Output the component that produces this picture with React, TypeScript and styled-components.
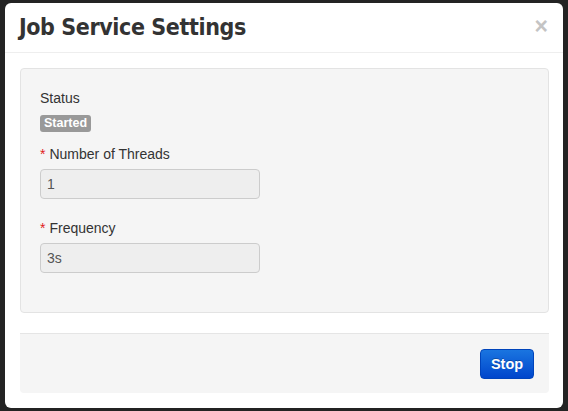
import React from "react";
import styled, { createGlobalStyle } from "styled-components";

const Global = createGlobalStyle`
  html, body { margin: 0; padding: 0; background: #232323; }
  body { font-family: "Liberation Sans", Arial, sans-serif; }
  * { box-sizing: border-box; }
`;

const Page = styled.div`
  width: 568px;
  height: 411px;
  padding: 3px 5px 3px 5px;
  background: #232323;
`;

const Modal = styled.div`
  width: 558px;
  height: 405px;
  background: #fff;
  border-radius: 6px;
  display: flex;
  flex-direction: column;
  overflow: hidden;
`;

const Header = styled.div`
  height: 50px;
  padding: 0 15px 0 14px;
  border-bottom: 1px solid #eeeeee;
  display: flex;
  align-items: center;
  justify-content: space-between;
`;

const Title = styled.h3`
  margin: 0;
  font-family: "DejaVu Sans Condensed", "DejaVu Sans", sans-serif;
  font-weight: bold;
  font-size: 23px;
  color: #333;
  letter-spacing: -0.4px;
  padding-bottom: 2px;
`;

const Close = styled.button`
  border: none;
  background: none;
  padding: 0;
  margin: 0 0 4px 0;
  font-family: "Liberation Sans", Arial, sans-serif;
  font-size: 23px;
  font-weight: bold;
  color: #c4c4c4;
  line-height: 20px;
  cursor: pointer;
`;

const Body = styled.div`
  flex: 1;
  padding: 15px 14px 15px 15px;
  display: flex;
  flex-direction: column;
  gap: 20px;
`;

const Well = styled.div`
  height: 245px;
  background: #f5f5f5;
  border: 1px solid #e3e3e3;
  border-radius: 4px;
  padding: 19px 19px;
  display: flex;
  flex-direction: column;
  align-items: flex-start;
`;

const Label = styled.div<{ $top?: number }>`
  font-size: 14px;
  line-height: 20px;
  color: #333;
  margin-top: ${(p) => p.$top ?? 0}px;
`;

const Req = styled.span`
  color: #e02020;
  margin-right: 4px;
`;

const Badge = styled.span`
  margin-top: 7px;
  display: inline-block;
  height: 17px;
  line-height: 17px;
  padding: 0 4px;
  background: #999999;
  color: #fff;
  font-size: 12.5px;
  font-weight: bold;
  border-radius: 3px;
`;

const Input = styled.input`
  margin-top: 5px;
  width: 220px;
  height: 30px;
  padding: 0 6px;
  background: #eeeeee;
  border: 1px solid #cccccc;
  border-radius: 4px;
  font-family: "Liberation Sans", Arial, sans-serif;
  font-size: 14px;
  color: #555;
  outline: none;
`;

const Footer = styled.div`
  height: 60px;
  background: #f5f5f5;
  border-top: 1px solid #e5e5e5;
  border-radius: 0 0 4px 4px;
  padding: 0 15px;
  display: flex;
  align-items: center;
  justify-content: flex-end;
`;

const Button = styled.button`
  width: 54px;
  height: 30px;
  border: 1px solid #0044bb;
  border-radius: 4px;
  background: linear-gradient(#1a75e0, #0046cc);
  color: #fff;
  font-family: "Liberation Sans", Arial, sans-serif;
  font-size: 14.5px;
  font-weight: bold;
  text-shadow: 0 -1px 0 rgba(0, 0, 0, 0.25);
  cursor: pointer;
`;

export default function App() {
  return (
    <Page>
      <Global />
      <Modal>
        <Header>
          <Title>Job Service Settings</Title>
          <Close>×</Close>
        </Header>
        <Body>
          <Well>
            <Label>Status</Label>
            <Badge>Started</Badge>
            <Label $top={12}>
              <Req>*</Req>Number of Threads
            </Label>
            <Input readOnly value="1" />
            <Label $top={19}>
              <Req>*</Req>Frequency
            </Label>
            <Input readOnly value="3s" />
          </Well>
          <Footer>
            <Button>Stop</Button>
          </Footer>
        </Body>
      </Modal>
    </Page>
  );
}
